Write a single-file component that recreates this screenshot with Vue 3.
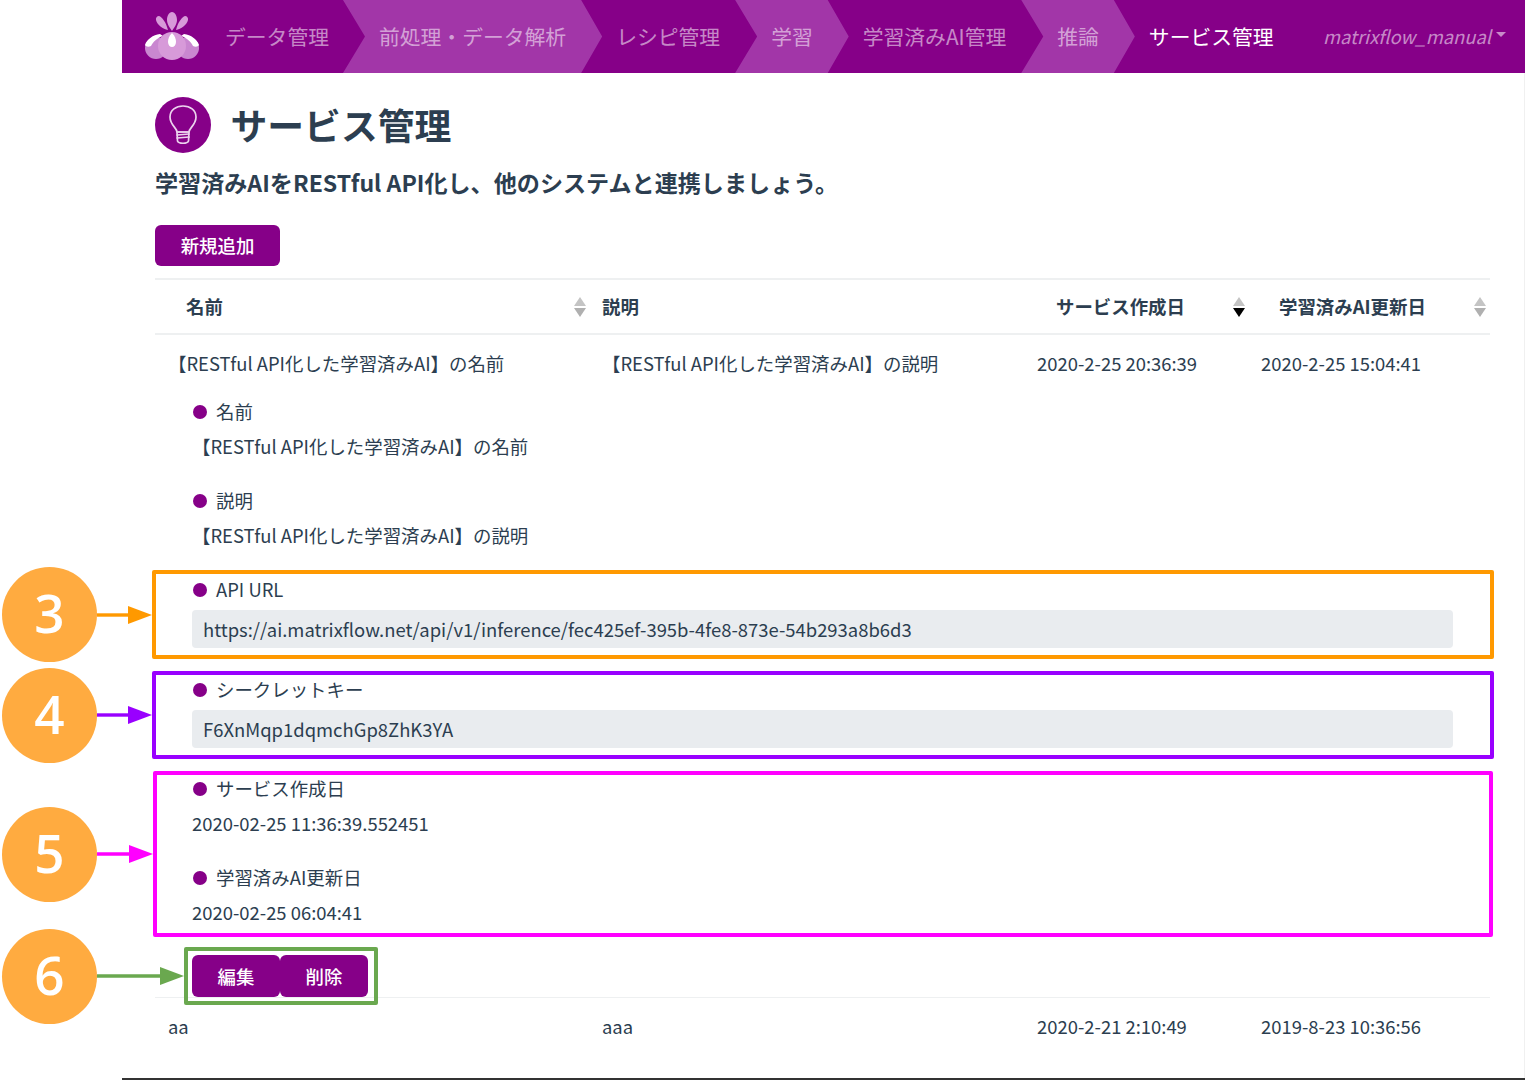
<template>
  <div class="page">
    <div class="main">
      <!-- top nav -->
      <div class="nav">
        <div class="logo">
          <svg width="56" height="52" viewBox="0 0 56 52">
            <path d="M28 2c3 0 5 4 5 8 0 4-3 8-5 11-2-3-5-7-5-11 0-4 2-8 5-8z" fill="#d79ad9" />
            <path d="M15 6c3 1 7 6 9 14-5-1-11-5-12-10-.5-2 1-4 3-4z" fill="#d79ad9" />
            <path d="M41 6c-3 1-7 6-9 14 5-1 11-5 12-10 .5-2-1-4-3-4z" fill="#d79ad9" />
            <circle cx="12" cy="38" r="11" fill="#c987d0" />
            <circle cx="44" cy="38" r="11" fill="#c987d0" />
            <path d="M1 35c2-6 8-10 15-11l3 2c-6 2-10 6-12 10-2 1-5 1-6-1z" fill="#fff" />
            <path d="M55 35c-2-6-8-10-15-11l-3 2c6 2 10 6 12 10 2 1 5 1 6-1z" fill="#fff" />
            <circle cx="28" cy="36" r="14" fill="#d79ad9" />
            <path d="M28 23c3 3 4 6 4 9s-2 5-4 5-4-2-4-5 1-6 4-9z" fill="#fff" />
          </svg>
        </div>
        <div
          v-for="(item, i) in navItems"
          :key="item.label"
          class="nav-item"
          :class="{ first: i === 0, light: item.light, active: item.active }"
        >
          {{ item.label }}
        </div>
        <div class="user">matrixflow_manual<span class="caret"></span></div>
      </div>

      <div class="content">
        <div class="heading">
          <div class="bulb">
            <svg width="32" height="42" viewBox="0 0 32 42" fill="none" stroke="#ecd3ee" stroke-width="1.7" stroke-linecap="round" stroke-linejoin="round">
              <path d="M10 28c0-4-7-7-7-15C3 6 9 2 16 2s13 4 13 11c0 8-7 11-7 15z" />
              <path d="M10 28h12l-.5 9c-1 3-10 3-11 0z" />
              <path d="M10 31l12-1M10 34l12-1" />
            </svg>
          </div>
          <h1>サービス管理</h1>
        </div>
        <p class="lead">学習済みAIをRESTful API化し、他のシステムと連携しましょう。</p>
        <button class="btn add-btn">新規追加</button>

        <div class="table">
          <div class="table-row head-row">
            <div v-for="col in columns" :key="col.label" class="th" :class="col.cls">
              <span>{{ col.label }}</span>
              <span v-if="col.sort" class="sort" :class="{ desc: col.sort === 'desc' }"></span>
            </div>
          </div>

          <div class="table-row">
            <div class="td">【RESTful API化した学習済みAI】の名前</div>
            <div class="td">【RESTful API化した学習済みAI】の説明</div>
            <div class="td">2020-2-25 20:36:39</div>
            <div class="td">2020-2-25 15:04:41</div>
          </div>

          <div class="detail">
            <div class="field">
              <div class="label">名前</div>
              <div>【RESTful API化した学習済みAI】の名前</div>
            </div>
            <div class="field">
              <div class="label">説明</div>
              <div>【RESTful API化した学習済みAI】の説明</div>
            </div>
            <div class="field input-field">
              <div class="label">API URL</div>
              <div class="readonly">https://ai.matrixflow.net/api/v1/inference/fec425ef-395b-4fe8-873e-54b293a8b6d3</div>
            </div>
            <div class="field input-field">
              <div class="label">シークレットキー</div>
              <div class="readonly">F6XnMqp1dqmchGp8ZhK3YA</div>
            </div>
            <div class="field">
              <div class="label">サービス作成日</div>
              <div>2020-02-25 11:36:39.552451</div>
            </div>
            <div class="field">
              <div class="label">学習済みAI更新日</div>
              <div>2020-02-25 06:04:41</div>
            </div>
            <div class="btn-group">
              <button class="btn">編集</button>
              <button class="btn">削除</button>
            </div>
          </div>

          <div class="table-row last-row">
            <div class="td">aa</div>
            <div class="td">aaa</div>
            <div class="td">2020-2-21 2:10:49</div>
            <div class="td">2019-8-23 10:36:56</div>
          </div>
        </div>
      </div>
      <div class="footer"></div>
    </div>

    <!-- annotation overlay -->
    <div class="marks">
      <template v-for="m in marks" :key="m.no">
        <div class="mark-box" :style="boxStyle(m)"></div>
        <div class="mark-no" :style="{ top: m.top + 'px' }">{{ m.no }}</div>
        <svg class="mark-arrow" :width="m.x - 97" height="24" :style="{ top: m.cy - 12 + 'px' }">
          <line x1="0" y1="12" :x2="m.x - 120" y2="12" :stroke="m.color" stroke-width="3.4" />
          <polygon :points="`${m.x - 121},3 ${m.x - 97},12 ${m.x - 121},21`" :fill="m.color" />
        </svg>
      </template>
    </div>
  </div>
</template>

<script setup>
const navItems = [
  { label: 'データ管理' },
  { label: '前処理・データ解析', light: true },
  { label: 'レシピ管理' },
  { label: '学習', light: true },
  { label: '学習済みAI管理' },
  { label: '推論', light: true },
  { label: 'サービス管理', active: true },
]

const columns = [
  { label: '名前', cls: 'col-name', sort: 'none' },
  { label: '説明', cls: 'col-desc' },
  { label: 'サービス作成日', cls: 'col-created', sort: 'desc' },
  { label: '学習済みAI更新日', cls: 'col-updated', sort: 'none' },
]

// 注釈の枠
const marks = [
  { no: 3, color: '#ff9900', x: 152, y: 570, w: 1342, h: 89, cy: 615, top: 567 },
  { no: 4, color: '#9900ff', x: 152, y: 671, w: 1342, h: 88, cy: 715, top: 668 },
  { no: 5, color: '#ff00ff', x: 153, y: 771, w: 1340, h: 166, cy: 854, top: 807 },
  { no: 6, color: '#6aa84f', x: 184, y: 947, w: 194, h: 58, cy: 976, top: 929 },
]

const boxStyle = (m) => ({
  left: m.x + 'px',
  top: m.y + 'px',
  width: m.w + 'px',
  height: m.h + 'px',
  borderColor: m.color,
})
</script>

<style>
html, body {
  margin: 0;
  background: #fff;
}
</style>

<style scoped>
.page {
  position: relative;
  width: 1525px;
  height: 1080px;
  overflow: hidden;
  padding-left: 122px;
  box-sizing: border-box;
  background: #fff;
  color: #2c3e50;
  font-family: "Noto Sans CJK JP", "Liberation Sans", sans-serif;
  font-size: 18.43px;
  line-height: 35px;
}

.main {
  width: 1403px;
  height: 1080px;
  box-sizing: border-box;
  border-right: 1px solid #f0f0f0;
  display: flex;
  flex-direction: column;
}

/* 顶部 */
.nav {
  display: flex;
  align-items: stretch;
  height: 73px;
  flex: none;
  margin-right: -1px;
  padding-right: 19px;
  background: #860088;
  font-size: 20.8px;
  color: rgba(255, 255, 255, 0.55);
}

.logo {
  width: 103px;
  padding: 10px 0 0 22px;
  box-sizing: border-box;
}

.logo svg {
  display: block;
}

.nav-item {
  display: flex;
  align-items: center;
  padding: 0 15px 0 14px;
  white-space: nowrap;
}

.nav-item.first {
  padding: 0 14px 0 0;
}

.nav-item.light {
  padding: 0 36px;
  background: #a236a8;
  clip-path: polygon(0 0, calc(100% - 21px) 0, 100% 50%, calc(100% - 21px) 100%, 0 100%, 22px 50%);
}

.nav-item.active {
  color: #fff;
}

.user {
  margin-left: auto;
  display: flex;
  align-items: center;
  font-size: 18.4px;
  font-style: italic;
  white-space: nowrap;
}

.caret {
  margin-left: 5px;
  margin-bottom: 4px;
  border-top: 5px solid currentColor;
  border-left: 5px solid transparent;
  border-right: 5px solid transparent;
}

/* 内容 */
.content {
  flex: 1;
  padding: 24px 34px 0 33px;
}

.heading {
  display: flex;
  align-items: center;
  gap: 19.5px;
  height: 56px;
}

.bulb {
  width: 56px;
  height: 56px;
  border-radius: 50%;
  background: #860088;
  display: flex;
  align-items: center;
  justify-content: center;
}

.heading h1 {
  margin: -3px 0 0;
  font-size: 36.8px;
  font-weight: 700;
  line-height: 56px;
}

.lead {
  margin: 12px 0 0;
  font-size: 23.1px;
  font-weight: 700;
  line-height: 34px;
}

.btn {
  display: block;
  width: 88px;
  height: 42px;
  padding: 0;
  border: none;
  border-radius: 6px;
  background: #860088;
  color: #fff;
  font: inherit;
  font-weight: 500;
  cursor: pointer;
}

.add-btn {
  width: 125px;
  height: 41px;
  margin-top: 26px;
}

.table {
  margin-top: 12px;
  border-top: 2px solid #eef0f1;
}

.table-row {
  display: grid;
  grid-template-columns: 434px 435px 224px 242px;
}

.head-row {
  height: 53px;
  border-bottom: 2px solid #eef0f1;
}

.th {
  display: flex;
  align-items: center;
  justify-content: space-between;
  padding-right: 3px;
  font-weight: 700;
}

.col-name { padding: 0 2px 0 31px; }
.col-desc { padding-left: 13px; }
.col-created { padding: 0 2px 0 32px; }
.col-updated { padding-left: 31px; }

.sort {
  position: relative;
  width: 13px;
  height: 20px;
}

.sort::before,
.sort::after {
  content: "";
  position: absolute;
  left: 0;
  border-left: 6.5px solid transparent;
  border-right: 6.5px solid transparent;
}

.sort::before {
  top: 0;
  border-bottom: 9px solid #c4c4c4;
}

.sort::after {
  bottom: 0;
  border-top: 9px solid #b0b0b0;
}

.sort.desc::after {
  border-top-color: #000;
}

.td {
  padding: 11px 0 0 13px;
  white-space: nowrap;
}

.detail {
  padding: 13px 37px 0;
}

.field {
  margin-bottom: 19px;
}

.label {
  display: flex;
  align-items: center;
  gap: 9px;
}

.label::before {
  content: "";
  width: 14px;
  height: 14px;
  margin-left: 1px;
  border-radius: 50%;
  background: #860088;
}

.input-field {
  margin-bottom: 24px;
}

.input-field + .input-field {
  margin-bottom: 23px;
}

.readonly {
  margin-top: 3px;
  height: 38px;
  line-height: 39px;
  padding-left: 11px;
  border-radius: 4px;
  background: #e9ecef;
}

.btn-group {
  display: flex;
  margin-top: 25px;
}

.table-row.last-row {
  border-top: 1px solid #eef0f1;
}

.footer {
  flex: none;
  height: 2px;
  margin-right: -1px;
  background: #333;
}

/* 注釈 */
.marks {
  position: absolute;
  inset: 0;
  pointer-events: none;
}

.mark-box {
  position: absolute;
  box-sizing: border-box;
  border: 4px solid;
  border-radius: 2px;
}

.mark-no {
  position: absolute;
  left: 2px;
  width: 95px;
  height: 95px;
  border-radius: 50%;
  background: #ffab40;
  color: #fff;
  font-family: "Open Sans", sans-serif;
  font-size: 53px;
  font-weight: 600;
  line-height: 91px;
  text-align: center;
}

.mark-arrow {
  position: absolute;
  left: 97px;
}
</style>
